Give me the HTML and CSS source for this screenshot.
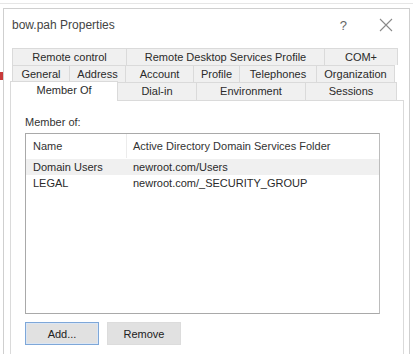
FILE: index.html
```html
<!DOCTYPE html>
<html lang="en">
<head>
    <meta charset="UTF-8">
    <title>bow.pah Properties</title>
    <link rel="stylesheet" href="styles.css">
</head>
<body>
    <div class="backdrop">
        <div class="back-mark"></div>
    </div>

    <div class="dialog">
        <div class="title-bar">
            <span class="title">bow.pah Properties</span>
            <span class="help">?</span>
            <span class="close">
                <svg width="14" height="14" viewBox="0 0 14 14">
                    <path d="M1 1 L13 13 M13 1 L1 13" stroke="#8a8a8a" stroke-width="1.1" fill="none"/>
                </svg>
            </span>
        </div>

        <div class="tabs">
            <div class="tab-row">
                <div class="tab" style="width: 115px">Remote control</div>
                <div class="tab" style="width: 199px">Remote Desktop Services Profile</div>
                <div class="tab" style="width: 74px">COM+</div>
            </div>
            <div class="tab-row">
                <div class="tab" style="width: 58px">General</div>
                <div class="tab" style="width: 57px">Address</div>
                <div class="tab" style="width: 69px">Account</div>
                <div class="tab" style="width: 47px">Profile</div>
                <div class="tab" style="width: 78px">Telephones</div>
                <div class="tab" style="width: 79px">Organization</div>
            </div>
            <div class="tab-row">
                <div class="tab active" style="width: 108px">Member Of</div>
                <div class="tab" style="width: 80px">Dial-in</div>
                <div class="tab" style="width: 110px">Environment</div>
                <div class="tab" style="width: 92px">Sessions</div>
            </div>
        </div>

        <div class="panel">
            <div class="label">Member of:</div>
            <div class="list">
                <div class="list-head">
                    <div class="col-name">Name</div>
                    <div class="col-folder">Active Directory Domain Services Folder</div>
                </div>
                <div class="list-row selected">
                    <div class="col-name">Domain Users</div>
                    <div class="col-folder">newroot.com/Users</div>
                </div>
                <div class="list-row">
                    <div class="col-name">LEGAL</div>
                    <div class="col-folder">newroot.com/_SECURITY_GROUP</div>
                </div>
            </div>
            <div class="buttons">
                <button class="btn default">Add...</button>
                <button class="btn">Remove</button>
            </div>
        </div>
    </div>
</body>
</html>
```

FILE: styles.css
```css
* {
    margin: 0;
    padding: 0;
    box-sizing: border-box;
}

body {
    font-family: "Liberation Sans", Arial, sans-serif;
    font-size: 11px;
    color: #2a2a2a;
    background: #ffffff;
    width: 413px;
    height: 354px;
    overflow: hidden;
    position: relative;
}

.backdrop {
    position: absolute;
    left: 0;
    top: 0;
    width: 413px;
    height: 354px;
    border-top: 1px solid #e6e6e6;
    margin-top: 3px;
}

.back-mark {
    position: absolute;
    left: 0;
    top: 68px;
    width: 3px;
    height: 8px;
    background: #c83a3a;
}

.dialog {
    position: absolute;
    left: 3px;
    top: 8px;
    width: 407px;
    height: 360px;
    background: #ffffff;
    border: 1px solid #cfcfcf;
    border-bottom: none;
}

.title-bar {
    height: 32px;
    display: flex;
    align-items: center;
    padding-left: 8px;
}

.title {
    font-size: 12px;
    color: #444;
    flex: 1;
}

.help {
    font-size: 13px;
    color: #666;
    margin-right: 32px;
}

.close {
    display: flex;
    margin-right: 16px;
}

.tabs {
    padding-left: 8px;
    padding-top: 7px;
}

.tab-row {
    display: flex;
    height: 17px;
}

.tab {
    background: #f0f0f0;
    border: 1px solid #dadada;
    border-bottom: none;
    margin-right: -1px;
    text-align: center;
    line-height: 16px;
    color: #2a2a2a;
    white-space: nowrap;
}

.tab-row:last-child {
    height: 18px;
}

.tab.active {
    background: #ffffff;
    margin-left: -2px;
    margin-top: -1px;
    height: 20px;
    position: relative;
    z-index: 1;
}

.panel {
    margin-left: 6px;
    width: 394px;
    height: 260px;
    border: 1px solid #dadada;
    border-bottom: none;
    padding: 14px 0 0 14px;
}

.label {
    color: #333;
    line-height: 14px;
    margin-bottom: 4px;
}

.list {
    width: 355px;
    height: 181px;
    border: 1px solid #a9a9a9;
    border-right-color: #bcbcbc;
}

.list-head,
.list-row {
    display: flex;
    height: 16px;
    line-height: 16px;
}

.list-head {
    height: 24px;
    line-height: 24px;
    margin-bottom: 1px;
    color: #333;
}

.list-head .col-name {
    border-right: 1px solid #ececec;
}

.list-row.selected {
    background: #f0f0f0;
}

.col-name {
    width: 101px;
    padding-left: 7px;
}

.col-folder {
    padding-left: 6px;
}

.buttons {
    display: flex;
    gap: 8px;
    margin-top: 8px;
}

.btn {
    font-family: inherit;
    font-size: 11px;
    width: 74px;
    height: 23px;
    background: #e1e1e1;
    border: 1px solid #dcdcdc;
    color: #222;
}

.btn.default {
    border: 1px solid #7ea7d8;
    box-shadow: inset 0 0 0 1px #dbe6f4;
}
```
